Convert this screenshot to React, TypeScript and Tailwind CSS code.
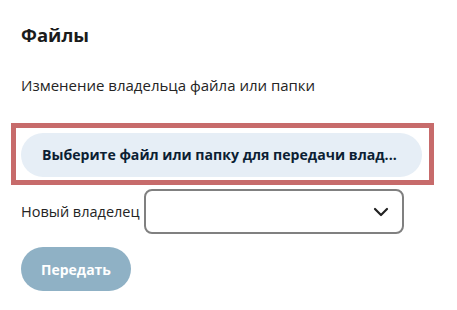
import { ChevronDown } from 'lucide-react';

export default function App() {
  return (
    <div className="min-h-[310px] w-[457px] bg-white pt-[22px] text-[#1f1f1f]" style={{ fontFamily: '"Open Sans", "Noto Sans", sans-serif' }}>
      <h2 className="pl-[21px] text-[18.5px] font-bold leading-[26px] text-[#1b1b1b]">Файлы</h2>
      <p className="mt-[26px] pl-[21px] text-[15px] leading-[22px] text-[#242424]">Изменение владельца файла или папки</p>

      <div className="ml-[11px] mt-[27px] w-[423px] border-[5px] border-[#c76b6b] pb-[3px] pl-[5px] pr-[7px] pt-[5px]">
        <button className="flex h-[44px] w-full items-center rounded-full bg-[#e6eef6] px-[21px] text-left">
          <span className="whitespace-nowrap text-[14.1px] font-bold text-[#0c1e33]">
            Выберите файл или папку для передачи влад...
          </span>
        </button>
      </div>

      <div className="mt-[4px] flex items-center pl-[21px]">
        <span className="w-[123px] text-[14.5px] text-[#242424]">Новый владелец</span>
        <div className="flex h-[45px] w-[260px] items-center justify-end rounded-[8px] border-2 border-[#808080] pr-[9px]">
          <ChevronDown className="h-[24px] w-[24px] text-[#222]" strokeWidth={2.2} />
        </div>
      </div>

      <div className="mt-[13px] pl-[21px]">
        <button className="h-[44px] w-[110px] rounded-full bg-[#8fb1c5] text-[14px] font-bold text-white">Передать</button>
      </div>
    </div>
  );
}
